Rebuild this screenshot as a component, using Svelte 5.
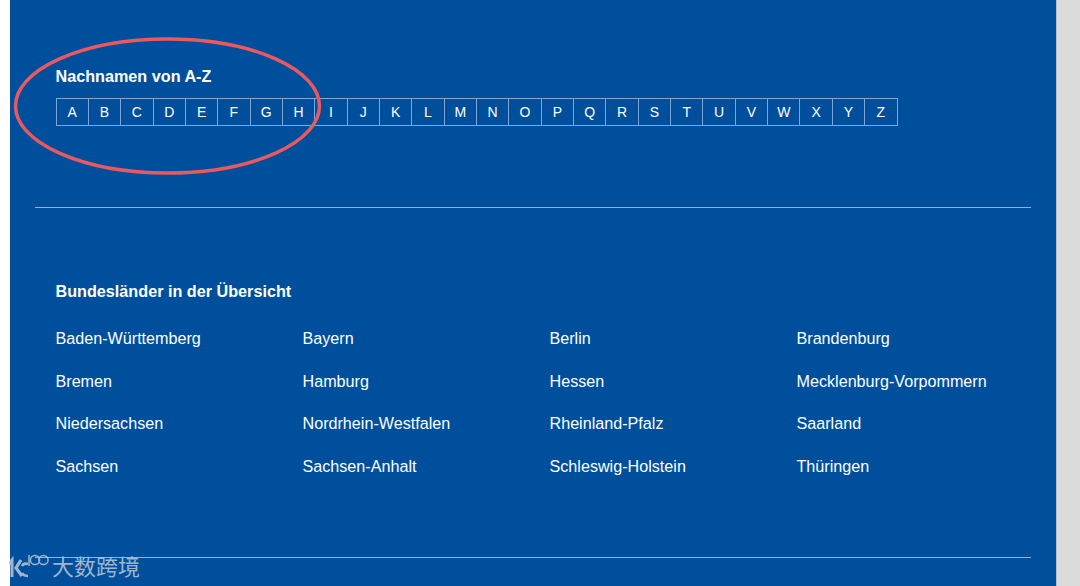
<script>
  const letters = 'ABCDEFGHIJKLMNOPQRSTUVWXYZ'.split('');
  const states = [
    'Baden-Württemberg', 'Bayern', 'Berlin', 'Brandenburg',
    'Bremen', 'Hamburg', 'Hessen', 'Mecklenburg-Vorpommern',
    'Niedersachsen', 'Nordrhein-Westfalen', 'Rheinland-Pfalz', 'Saarland',
    'Sachsen', 'Sachsen-Anhalt', 'Schleswig-Holstein', 'Thüringen'
  ];
</script>

<div class="page">
  <main class="panel">
    <section class="names">
      <h2>Nachnamen von A-Z</h2>
      <ul class="alphabet">
        {#each letters as letter}
          <li><a href="#{letter}">{letter}</a></li>
        {/each}
      </ul>
    </section>

    <section class="states">
      <h2>Bundesländer in der Übersicht</h2>
      <ul class="state-grid">
        {#each states as state}
          <li><a href="#{state}">{state}</a></li>
        {/each}
      </ul>
    </section>
  </main>
  <aside class="gutter"></aside>

  <svg class="marker" width="340" height="150" viewBox="0 0 340 150" fill="none">
    <ellipse cx="167.500" cy="76" rx="152" ry="67" stroke="#e85a5f" stroke-width="3.5" />
  </svg>

  <div class="watermark">
    <svg class="logo" width="40" height="26" viewBox="0 0 40 26" fill="none" stroke="currentColor">
      <path d="M0 11 3 7v17" stroke-width="3" />
      <path d="M12 7 7 15l6 8" stroke-width="3.2" />
      <path d="M19 11c-3-1-5 0-6 2M19 23c-3 0-5-1-6-3" stroke-width="2.6" />
      <path d="M20 2v11" stroke-width="1.5" />
      <circle cx="26" cy="7" r="4.6" stroke-width="1.5" />
      <circle cx="34.500" cy="7" r="4.6" stroke-width="1.5" />
    </svg>
    <span>大数跨境</span>
  </div>
</div>

<style>
  :global(body) {
    margin: 0;
    background: #fff;
  }

  .page {
    position: relative;
    display: flex;
    height: 586px;
    overflow: hidden;
    padding-left: 10px;
    box-sizing: border-box;
    font-family: "Liberation Sans", Arial, sans-serif;
    font-size: 16.15px;
    color: #fff;
  }

  .panel {
    width: 1046px;
    flex: none;
    background: #004f9c;
    padding: 0 25px;
    box-sizing: border-box;
  }

  .gutter {
    flex: 1;
    background: #dbdbdb;
    border-left: 1px solid #b9c0cc;
  }

  h2 {
    margin: 0;
    font-size: 16.2px;
    line-height: 20px;
    font-weight: bold;
  }

  ul {
    list-style: none;
    margin: 0;
    padding: 0;
  }

  a {
    color: inherit;
    text-decoration: none;
  }

  .names {
    padding: 66px 0 81px 20.5px;
    border-bottom: 1px solid #8fb3dc;
  }

  .alphabet {
    display: flex;
    width: 842px;
    margin-top: 12px;
    border: 1px solid #7ea5d3;
    box-sizing: border-box;
  }

  .alphabet li {
    flex: 1;
    height: 26px;
    border-left: 1px solid #7ea5d3;
    text-align: center;
    font-size: 14px;
    line-height: 27px;
  }

  .alphabet li:first-child {
    border-left: 0;
  }

  .states {
    padding: 73px 0 82px 20.5px;
    border-bottom: 1px solid #8fb3dc;
  }

  .state-grid {
    display: grid;
    grid-template-columns: repeat(4, 247px);
    margin-top: 28px;
    row-gap: 24.6px;
  }

  .state-grid li {
    line-height: 18px;
  }

  .marker {
    position: absolute;
    left: 0;
    top: 30px;
  }

  .watermark {
    position: absolute;
    left: 9px;
    top: 551px;
    display: flex;
    align-items: center;
    gap: 3px;
    color: #bcc8d6;
    opacity: 0.85;
    font-family: "Noto Sans CJK SC", sans-serif;
    font-size: 22px;
    line-height: 26px;
  }

  .logo {
    flex: none;
    margin-top: 2px;
  }
</style>
